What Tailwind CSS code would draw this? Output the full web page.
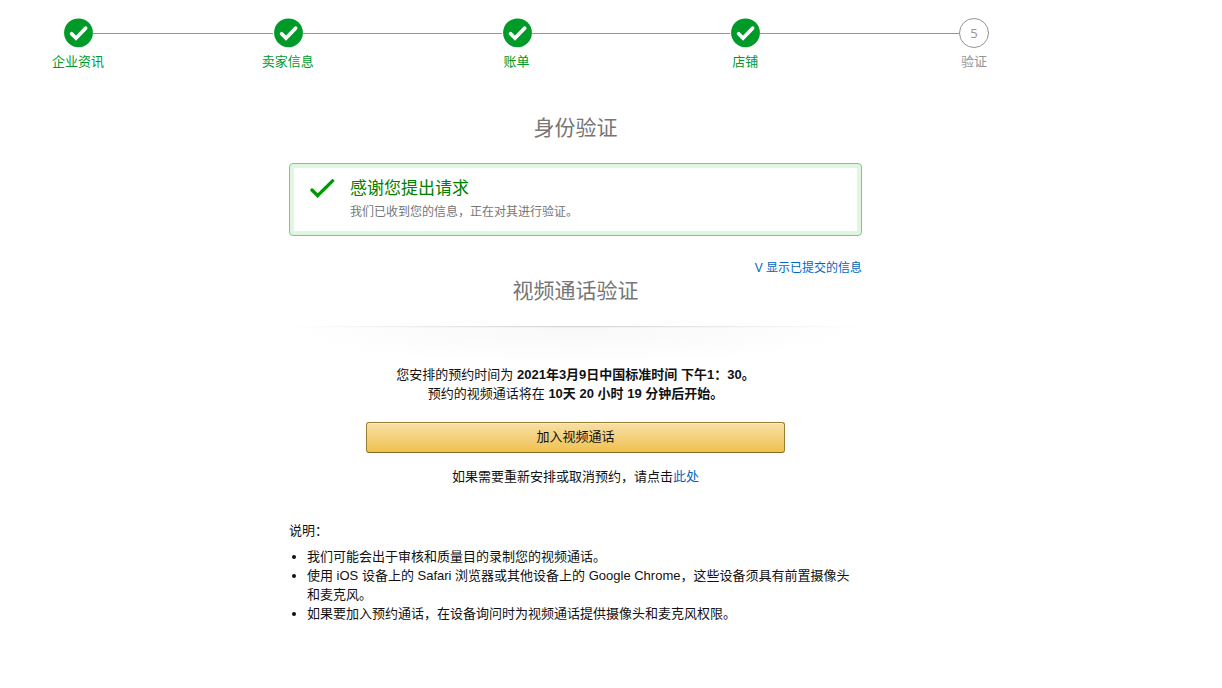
<!DOCTYPE html>
<html lang="zh-CN">
<head>
    <meta charset="UTF-8">
    <meta name="viewport" content="width=device-width, initial-scale=1.0">
    <script src="https://cdn.jsdelivr.net/npm/@tailwindcss/browser@4"></script>
    <title>身份验证</title>
</head>
<body class="bg-white text-[#111] text-[13px] leading-[19px] font-['Liberation_Sans','Noto_Sans_CJK_SC',sans-serif]">
    <div class="pr-[71px] pt-[18px]">

        <!-- registration steps -->
        <ol class="flex ml-[63px] mr-[162px] text-[#009a29]">
            <li class="flex flex-col items-center w-[30px] shrink-0">
                <svg class="size-[30px]" viewBox="0 0 30 30" aria-hidden="true">
                    <circle cx="15.5" cy="14.8" r="14.4" fill="#009a29"/>
                    <path d="M8.6 15.7L13 20.2L22.6 10.2" fill="none" stroke="#fff" stroke-width="3.7" stroke-linecap="round"/>
                </svg>
                <span class="mt-1 whitespace-nowrap">企业资讯</span>
            </li>
            <li class="grow-[180] basis-0 h-px mt-[15px] bg-[#949494]" role="presentation"></li>
            <li class="flex flex-col items-center w-[30px] shrink-0">
                <svg class="size-[30px]" viewBox="0 0 30 30" aria-hidden="true">
                    <circle cx="15.5" cy="14.8" r="14.4" fill="#009a29"/>
                    <path d="M8.6 15.7L13 20.2L22.6 10.2" fill="none" stroke="#fff" stroke-width="3.7" stroke-linecap="round"/>
                </svg>
                <span class="mt-1 whitespace-nowrap">卖家信息</span>
            </li>
            <li class="grow-[199] basis-0 h-px mt-[15px] bg-[#949494]" role="presentation"></li>
            <li class="flex flex-col items-center w-[30px] shrink-0">
                <svg class="size-[30px]" viewBox="0 0 30 30" aria-hidden="true">
                    <circle cx="15.5" cy="14.8" r="14.4" fill="#009a29"/>
                    <path d="M8.6 15.7L13 20.2L22.6 10.2" fill="none" stroke="#fff" stroke-width="3.7" stroke-linecap="round"/>
                </svg>
                <span class="mt-1 whitespace-nowrap">账单</span>
            </li>
            <li class="grow-[199] basis-0 h-px mt-[15px] bg-[#949494]" role="presentation"></li>
            <li class="flex flex-col items-center w-[30px] shrink-0">
                <svg class="size-[30px]" viewBox="0 0 30 30" aria-hidden="true">
                    <circle cx="15.5" cy="14.8" r="14.4" fill="#009a29"/>
                    <path d="M8.6 15.7L13 20.2L22.6 10.2" fill="none" stroke="#fff" stroke-width="3.7" stroke-linecap="round"/>
                </svg>
                <span class="mt-1 whitespace-nowrap">店铺</span>
            </li>
            <li class="grow-[199] basis-0 h-px mt-[15px] bg-[#949494]" role="presentation"></li>
            <li class="flex flex-col items-center w-[30px] shrink-0 text-[#949494]">
                <span class="flex items-center justify-center size-[30px] rounded-full border border-[#949494] font-['Open_Sans',sans-serif]">5</span>
                <span class="mt-1 whitespace-nowrap">验证</span>
            </li>
        </ol>

        <main class="max-w-[573px] mx-auto mt-[43px] pb-16">
            <h1 class="text-[21px] leading-7 text-center text-[#767676]">身份验证</h1>

            <!-- success message -->
            <div class="flex mt-[21px] pl-5 pt-[13px] pb-[13px] border border-[#7fc87f] rounded inset-shadow-[0_0_0_4px_#dff6df]" role="status">
                <svg class="w-[26px] h-5 mt-0.5 shrink-0" viewBox="0 0 26 20" aria-hidden="true">
                    <path d="M2 11L7.6 16.7L22.6 1.9" fill="none" stroke="#090" stroke-width="3.4" stroke-linecap="round"/>
                </svg>
                <div class="ml-[14px]">
                    <h2 class="text-[17px] leading-6 text-[#008000]">感谢您提出请求</h2>
                    <p class="mt-0.5 text-xs leading-[19px] text-[#767676]">我们已收到您的信息，正在对其进行验证。</p>
                </div>
            </div>

            <div class="mt-[23px] text-right text-xs leading-[18px]">
                <a href="#" class="text-[#0066c0] hover:underline">V 显示已提交的信息</a>
            </div>

            <h1 class="text-[21px] leading-7 text-center text-[#767676]">视频通话验证</h1>
            <div class="mt-[21px] h-px bg-linear-to-r from-white via-[#d4d4d4] to-white"></div>
            <div class="h-px bg-linear-to-r from-white via-[#efefef] to-white"></div>
            <div class="h-[37px] bg-[radial-gradient(ellipse_50%_100%_at_50%_0%,#f8f8f8,#ffffff)]"></div>

            <div class="text-center">
                <p>您安排的预约时间为 <b>2021年3月9日中国标准时间 下午1：30。</b></p>
                <p>预约的视频通话将在 <b>10天 20 小时 19 分钟后开始。</b></p>
                <div class="px-[77px] mt-[19px]">
                    <button type="button" class="w-full h-[31px] pb-0.5 rounded-[3px] border border-[#9c7e31] border-b-[#846a29] bg-linear-to-b from-[#f7dfa5] to-[#f0c14b] cursor-pointer inset-shadow-[0_1px_0_rgb(255_255_255/0.4)]">加入视频通话</button>
                </div>
                <p class="mt-[14px]">如果需要重新安排或取消预约，请点击<a href="#" class="text-[#0066c0] hover:underline">此处</a></p>
            </div>

            <p class="mt-[35px]">说明：</p>
            <ul class="mt-[7px] pl-[18px] list-disc">
                <li>我们可能会出于审核和质量目的录制您的视频通话。</li>
                <li>使用 iOS 设备上的 Safari 浏览器或其他设备上的 Google Chrome，这些设备须具有前置摄像头和麦克风。</li>
                <li>如果要加入预约通话，在设备询问时为视频通话提供摄像头和麦克风权限。</li>
            </ul>
        </main>
    </div>
</body>
</html>
